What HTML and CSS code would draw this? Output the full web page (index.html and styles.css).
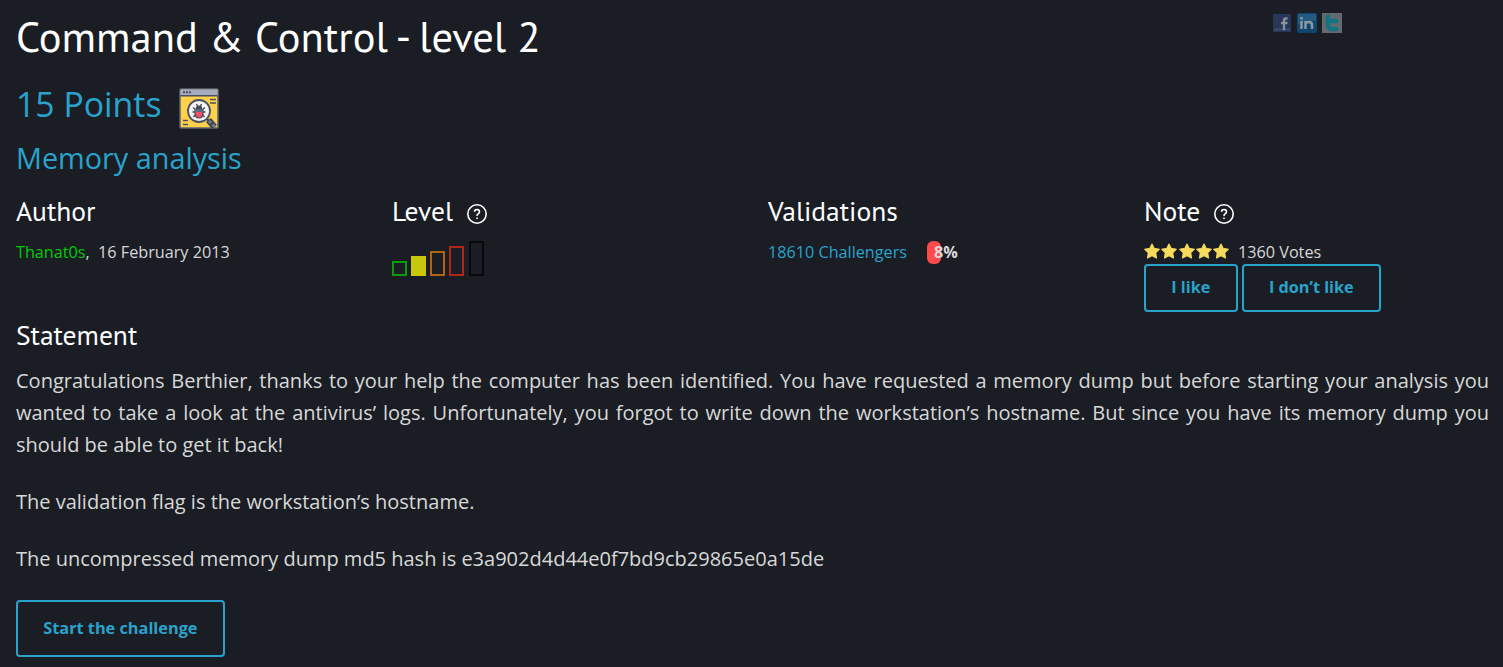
FILE: index.html
```html
<!DOCTYPE html>
<html lang="en">
<head>
    <meta charset="utf-8">
    <title>Command &amp; Control - level 2</title>
    <link rel="stylesheet" href="styles.css">
</head>
<body>
    <header class="top">
        <h1>Command &amp; Control - level 2</h1>
        <div class="share">
            <svg width="18" height="18" viewBox="0 0 18 18">
                <rect width="18" height="18" fill="#26375a"/>
                <path d="M1 15.5h16" stroke="#3b4d70" stroke-width="2"/>
                <path d="M14.5 4.5h-1.5q-2 0-2 2v9.500M8 9h6.500" fill="none" stroke="#8b919c" stroke-width="2.300"/>
            </svg>
            <svg width="20" height="20" viewBox="0 0 20 20">
                <rect width="20" height="20" rx="2" fill="#12456d"/>
                <path d="M1 1h18v7Q10 7 1 12z" fill="#245a80"/>
                <path d="M4.500 8v8M4.500 4v2.500M8.500 16V8M8.500 11q1-2 3.500-2 3 0 3 3v4" fill="none" stroke="#8b98a3" stroke-width="2.500"/>
            </svg>
            <svg width="20" height="20" viewBox="0 0 20 20">
                <rect width="20" height="20" fill="#626970"/>
                <path d="M6 4v8q0 4 4 4h4M6 8h8" fill="none" stroke="#137380" stroke-width="4.500" stroke-linecap="round"/>
            </svg>
        </div>
    </header>

    <h2 class="points">
        <span>15 Points</span>
        <svg width="40" height="41" viewBox="0 0 40 41">
            <rect x="1" y="1" width="38" height="39" rx="1" fill="#ffd04a" stroke="#5c6371" stroke-width="1.500"/>
            <path d="M1.500 1.500h37V7h-37z" fill="#a5acbd"/>
            <path d="M1.500 7.700h37" stroke="#495162" stroke-width="1.400"/>
            <path d="M4 4.300h2M7 4.300h2M10 4.300h2" stroke="#495162" stroke-width="2"/>
            <path d="M31 11.500h6M31 15h6M4 32.500h5M4 36.500h5" stroke="#495162" stroke-width="1.500"/>
            <path d="M27 30l3 3" stroke="#3d4555" stroke-width="2"/>
            <path d="M29.500 32l6 7" stroke="#3d4555" stroke-width="6.500"/>
            <path d="M30 33l2 2M33.500 36.500l2 2" stroke="#6f7c91" stroke-width="3"/>
            <circle cx="20" cy="23" r="11" fill="#f4f4f4" stroke="#495162" stroke-width="1.800"/>
            <path d="M17.500 16l1.500 3M22.500 16l-1.500 3M14 19.500l2.500 2M26 19.500l-2.500 2M13.500 24h13M14.500 29l2.500-3M25.500 29l-2.500-3" fill="none" stroke="#434a59" stroke-width="1.400"/>
            <ellipse cx="20" cy="20" rx="3.200" ry="2.500" fill="#434a59"/>
            <path d="M16 22q4-2 8 0v3q0 5-4 5t-4-5z" fill="#f05261" stroke="#434a59" stroke-width="1.200"/>
            <path d="M16 21.500h8V24h-8z" fill="#5e6b80"/>
        </svg>
    </h2>
    <h3 class="category">Memory analysis</h3>

    <section class="infos">
        <div>
            <h4>Author</h4>
            <p><a class="author" href="#">Thanat0s</a>,&nbsp; 16 February 2013</p>
        </div>
        <div>
            <h4>
                <span>Level</span>
                <svg class="help" width="20" height="20" viewBox="0 0 20 20">
                    <circle cx="10" cy="10" r="9.200"/>
                    <path d="M7.500 7.800q0-2.300 2.500-2.300t2.500 2.300q0 1.200-1.300 2Q10 10.500 10 12M10 13.500v1.500"/>
                </svg>
            </h4>
            <div class="bars">
                <span class="bar bar1"></span>
                <span class="bar bar2"></span>
                <span class="bar bar3"></span>
                <span class="bar bar4"></span>
                <span class="bar bar5"></span>
            </div>
        </div>
        <div>
            <h4>Validations</h4>
            <p class="validations">
                <a href="#">18610 Challengers</a>
                <span class="gauge"><b>8%</b></span>
            </p>
        </div>
        <div>
            <h4>
                <span>Note</span>
                <svg class="help" width="20" height="20" viewBox="0 0 20 20">
                    <circle cx="10" cy="10" r="9.200"/>
                    <path d="M7.500 7.800q0-2.300 2.500-2.300t2.500 2.300q0 1.200-1.300 2Q10 10.500 10 12M10 13.500v1.500"/>
                </svg>
            </h4>
            <p class="votes">
                <svg width="86" height="16" viewBox="0 0 86 16">
                    <defs>
                        <path id="star" d="M8 .8l2.300 4.600 5.200.8-3.700 3.700.8 5.300L8 12.800l-4.600 2.400.8-5.300L.5 6.200l5.200-.8z"/>
                    </defs>
                    <g fill="#f6db5c" stroke="#f6db5c" stroke-linejoin="round">
                        <use href="#star"/>
                        <use href="#star" x="17"/>
                        <use href="#star" x="35"/>
                        <use href="#star" x="52"/>
                        <use href="#star" x="69"/>
                    </g>
                </svg>
                <span>1360 Votes</span>
            </p>
            <div class="vote-buttons">
                <a class="button" href="#">I like</a>
                <a class="button" href="#">I don’t like</a>
            </div>
        </div>
    </section>

    <section class="statement">
        <h4>Statement</h4>
        <p>Congratulations Berthier, thanks to your help the computer has been identified. You have requested a memory dump but before starting your analysis you wanted to take a look at the antivirus’ logs. Unfortunately, you forgot to write down the workstation’s hostname. But since you have its memory dump you should be able to get it back!</p>
        <p>The validation flag is the workstation’s hostname.</p>
        <p>The uncompressed memory dump md5 hash is e3a902d4d44e0f7bd9cb29865e0a15de</p>
        <a class="button start" href="#">Start the challenge</a>
    </section>
</body>
</html>
```
FILE: styles.css
```css
* {
    box-sizing: border-box;
}

body {
    margin: 0;
    padding: 5px 0 0 16px;
    background-color: #1a1d24;
    color: #d8d8d8;
    font-family: "Open Sans", sans-serif;
    font-size: 16.2px;
    line-height: 24px;
    overflow: hidden;
}

h1, h2, h3, h4, p {
    margin: 0;
    font-weight: normal;
}

h1, h4 {
    font-family: "PT Sans", Lato, sans-serif;
    color: #fff;
}

a {
    color: #29a3cc;
    text-decoration: none;
}

.top {
    display: flex;
    justify-content: space-between;
    height: 74px;
}

h1 {
    font-size: 42.5px;
    line-height: 64px;
}

.share {
    display: flex;
    align-items: center;
    gap: 6px;
    height: 20px;
    margin: 8px 161px 0 0;
}

.share svg + svg + svg {
    margin-left: -1px;
}

.points {
    display: flex;
    align-items: center;
    gap: 17px;
    height: 50px;
    color: #29a3cc;
    font-size: 33.8px;
    line-height: 50px;
}

.points svg {
    margin-top: 9px;
}

.category {
    height: 62px;
    color: #29a3cc;
    font-size: 28.8px;
    line-height: 58px;
}

.infos {
    display: grid;
    grid-template-columns: repeat(4, 376px);
    height: 124px;
}

h4 {
    display: flex;
    align-items: center;
    gap: 14px;
    height: 40px;
    font-size: 27.5px;
    line-height: 40px;
}

.infos h4 {
    margin-bottom: 9px;
}

.infos p {
    height: 24px;
}

.help {
    margin-top: 6px;
    fill: none;
    stroke: #fff;
    stroke-width: 1.6;
}

.author {
    color: #00cc00;
}

.bars {
    display: flex;
    align-items: flex-end;
    gap: 4px;
    height: 36px;
}

.bar {
    width: 15px;
    border: 2px solid;
}

.bar1 {
    height: 15px;
    color: #0c9b0c;
}

.bar2 {
    height: 20px;
    color: #c8c80a;
    background-color: #c8c80a;
}

.bar3 {
    height: 25px;
    color: #b06414;
}

.bar4 {
    height: 30px;
    color: #b02818;
}

.bar5 {
    height: 35px;
    margin-left: 1px;
    color: #07080b;
}

.validations {
    display: flex;
    gap: 20px;
}

.gauge {
    width: 14px;
    height: 23px;
    margin-top: 1px;
    padding-left: 7px;
    border-radius: 6px;
    background-color: #ff4a4a;
    line-height: 22px;
}

.votes {
    display: flex;
    align-items: center;
    gap: 8px;
}

.votes svg {
    margin-top: -2px;
}

.vote-buttons {
    display: flex;
    gap: 4px;
}

.button {
    display: inline-block;
    height: 48px;
    padding: 0 25.3px;
    border: 2px solid #29a3cc;
    border-radius: 4px;
    font-weight: bold;
    line-height: 42px;
}

.statement h4 {
    margin-bottom: 10px;
}

.statement p {
    width: 1473px;
    margin-bottom: 25px;
    font-size: 20px;
    line-height: 32px;
    text-align: justify;
}

.start {
    height: 57px;
    font-size: 16.3px;
    line-height: 52px;
}
```
